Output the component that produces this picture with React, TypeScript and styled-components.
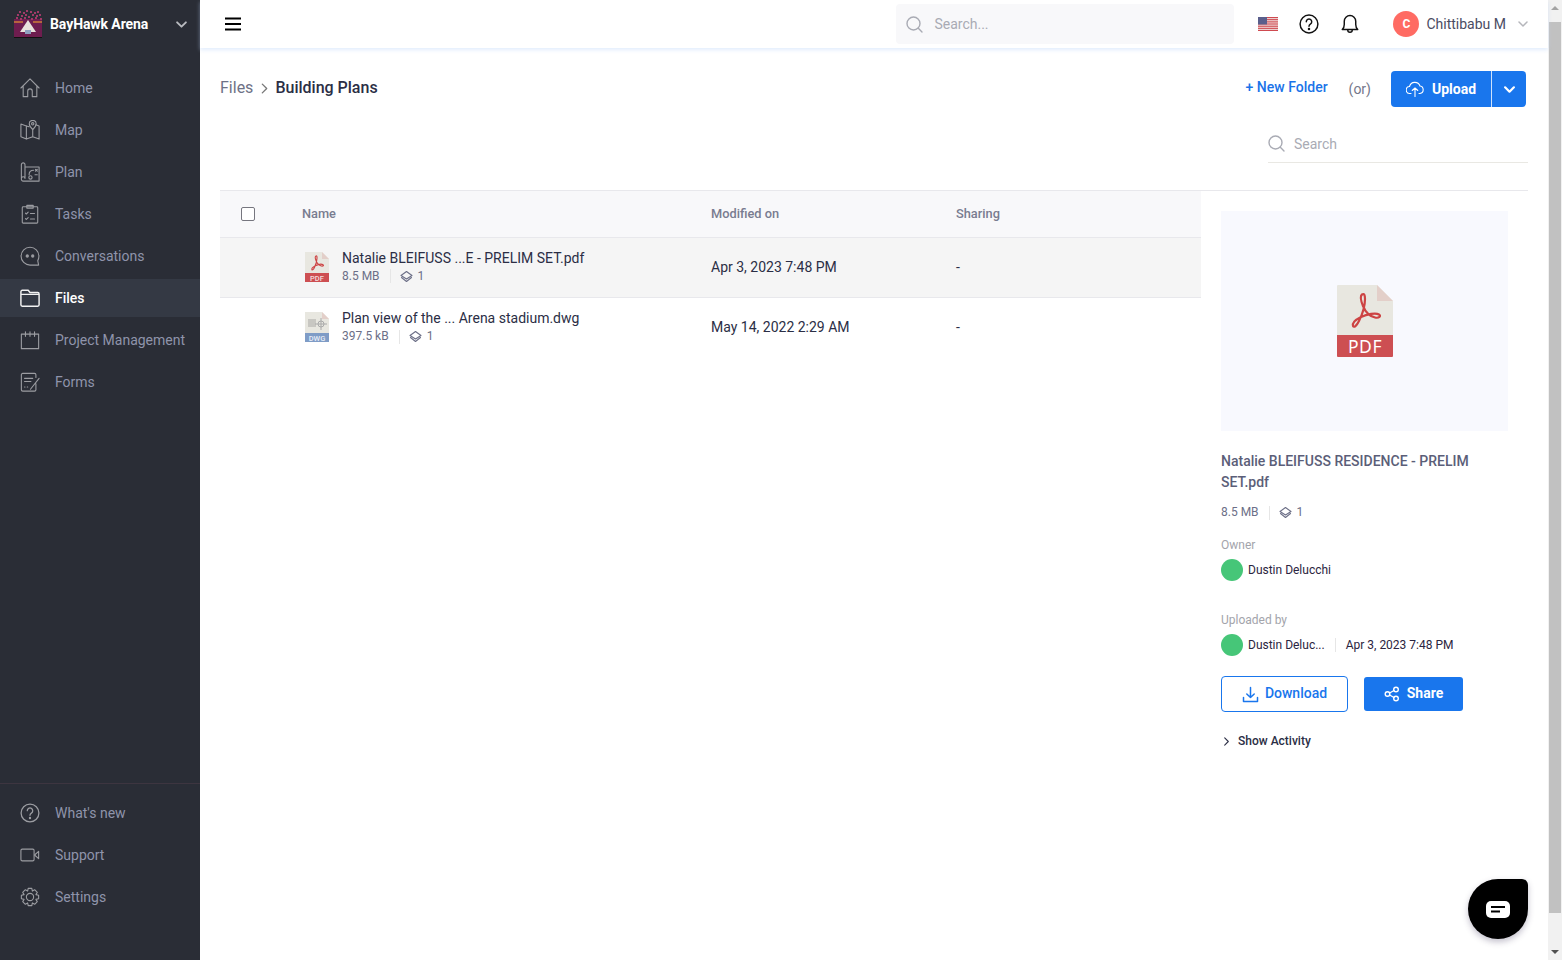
import React from "react";
import styled, { createGlobalStyle } from "styled-components";

const Global = createGlobalStyle`
  html, body { margin: 0; padding: 0; height: 100%; overflow: hidden; background: #fff; }
  body { font-family: Roboto, "Liberation Sans", Arial, sans-serif; -webkit-font-smoothing: auto; }
  * { box-sizing: border-box; }
  #root { height: 100%; }
`;

const Shell = styled.div`display: flex; width: 1562px; height: 960px; position: relative; overflow: hidden;`;
const Sidebar = styled.aside`width: 200px; height: 960px; flex: none; background: #2a2d36; display: flex; flex-direction: column;`;
const Brand = styled.div`height: 48px; display: flex; align-items: center; padding: 0 13px 0 14px; color: #fff; font-size: 14px; font-weight: 700; letter-spacing: -0.08px; svg:last-child { color: #b9bbc0; }`;
const BrandName = styled.span`margin-left: 8px; flex: 1;`;
const NavGroup = styled.nav<{ $bottom?: boolean }>`
  display: flex; flex-direction: column; gap: 4px;
  padding-top: ${p => (p.$bottom ? "10px" : "21px")};
  padding-bottom: ${p => (p.$bottom ? "44px" : "0")};
  ${p => (p.$bottom ? "margin-top: auto; border-top: 1px solid #3d3540;" : "")}
`;
const NavItem = styled.a<{ $active?: boolean }>`
  height: 38px; display: flex; align-items: center; gap: 15px; padding-left: 20px;
  font-size: 14px; white-space: nowrap;
  font-weight: ${p => (p.$active ? 500 : 400)};
  color: ${p => (p.$active ? "#fff" : "#8f94ab")};
  background: ${p => (p.$active ? "#343944" : "transparent")};
  svg { width: 20px; height: 20px; color: ${p => (p.$active ? "#f2f2f2" : "#9c9da2")}; flex: none; }
`;

const Main = styled.main`flex: 1; min-width: 0; display: flex; flex-direction: column; height: 960px;`;
const Header = styled.header`height: 48px; margin-bottom: 1px; flex: none; display: flex; align-items: center; padding: 0 20px 0 25px; background: #fff; box-shadow: 0 2px 4px rgba(190, 215, 250, 0.45); position: relative;`;
const HeaderSearch = styled.div`width: 338px; height: 40px; margin-left: auto; background: #f8f8fa; border-radius: 4px; display: flex; align-items: center; gap: 11px; padding-left: 10px; font-size: 14px; color: #a9abb4;`;
const Flag = styled.div`margin-left: 24px; display: flex;`;
const HeaderIcon = styled.div<{ $gap: number }>`margin-left: ${p => p.$gap}px; display: flex; color: #111; svg { width: 20px; height: 20px; }`;
const Avatar = styled.div`width: 26px; height: 26px; margin-left: 33px; border-radius: 50%; background: #ff6b63; color: #fff; font-size: 12px; font-weight: 700; display: flex; align-items: center; justify-content: center;`;
const UserName = styled.span`margin-left: 7px; font-size: 14px; color: #4a4c63;`;
const UserCaret = styled.div`margin-left: 12px; display: flex; color: #b5b6bb;`;

const Content = styled.div`padding: 22px 20px 0; display: flex; flex-direction: column;`;
const TopRow = styled.div`height: 36px; display: flex; align-items: center; padding-right: 2px;`;
const Crumb = styled.span<{ $current?: boolean }>`font-size: 16px; position: relative; top: -2px; color: ${p => (p.$current ? "#2b2e45" : "#6e7186")}; font-weight: ${p => (p.$current ? 500 : 400)};`;
const CrumbSep = styled.span`display: flex; margin: 0 5px 0 6px; color: #777; position: relative; top: -1px;`;
const NewFolder = styled.a`margin-left: auto; font-size: 14px; font-weight: 500; color: #1a73e8; position: relative; top: -2px;`;
const Or = styled.span`margin: 0 20px 0 21px; font-size: 14px; color: #74778a;`;
const UploadGroup = styled.div`display: flex; width: 135px; height: 36px; border-radius: 4px; background: #1976ed; color: #fff; overflow: hidden;`;
const UploadMain = styled.div`width: 100px; display: flex; align-items: center; justify-content: center; gap: 8px; font-size: 14px; font-weight: 700;`;
const UploadCaret = styled.div`width: 35px; border-left: 1px solid #cfe2fb; display: flex; align-items: center; justify-content: center;`;
const SearchRow = styled.div`display: flex; justify-content: flex-end; margin-top: 19px; margin-bottom: 27px;`;
const SearchField = styled.div`width: 260px; height: 37px; padding-bottom: 1px; border-bottom: 1px solid #e9e8e3; display: flex; align-items: center; gap: 9px; font-size: 14px; color: #a9abb4;`;
const Panels = styled.div`display: flex; border-top: 1px solid #e8e8ec; gap: 20px;`;
const Table = styled.div`width: 981px; flex: none;`;
const cols = "82px 409px 245px 1fr";
const HeadRow = styled.div`display: grid; grid-template-columns: ${cols}; height: 47px; align-items: center; background: #f8f8fa; border-bottom: 1px solid #e8e8ec; font-size: 12.8px; font-weight: 500; color: #797c90;`;
const HeadLabel = styled.span`padding-bottom: 2px;`;
const CheckCell = styled.div`padding-left: 21px; display: flex;`;
const CheckBox = styled.span`width: 14px; height: 14px; border: 1px solid #76767f; border-radius: 2px; background: #fff;`;
const Row = styled.div<{ $selected?: boolean }>`display: grid; grid-template-columns: ${cols}; height: 60px; padding-bottom: 2px; align-items: center; border-bottom: ${p => (p.$selected ? "1px solid #e8e8ec" : "none")}; background: ${p => (p.$selected ? "#f5f5f5" : "#fff")}; font-size: 14px; color: #2b2e45;`;
const NameCell = styled.div`display: flex; align-items: center; gap: 13px; margin-left: -40px; grid-column: 2; padding-left: 43px;`;
const NameWrap = styled.div`display: flex; flex-direction: column; gap: 1px;`;
const FileName = styled.span`font-size: 14px; line-height: 18px; color: #2b2e45;`;
const Meta = styled.div`display: flex; align-items: center; font-size: 12px; line-height: 17px; color: #6c6f87;`;
const MetaSep = styled.span`width: 1px; height: 14px; background: #e6e6e6; margin: 0 9px 0 10px;`;
const MetaCount = styled.span`display: flex; align-items: center; gap: 5px;`;

const Detail = styled.section`width: 287px; padding-top: 20px; display: flex; flex-direction: column;`;
const Preview = styled.div`height: 220px; background: #f8f9fe; display: flex; align-items: center; justify-content: center;`;
const DetailTitle = styled.div`margin-top: 20px; font-size: 14px; line-height: 21px; font-weight: 500; color: #5b5e78;`;
const DetailMeta = styled(Meta)`margin-top: 11px;`;
const Label = styled.div<{ $top: number }>`margin-top: ${p => p.$top}px; font-size: 12px; line-height: 16px; color: #a3a4ab;`;
const Person = styled.div`display: flex; align-items: center; margin-top: 6px; font-size: 12px; color: #2b2440;`;
const Dot = styled.span`width: 22px; height: 22px; border-radius: 50%; background: #46c678; margin-right: 5px;`;
const PersonSep = styled.span`width: 1px; height: 14px; background: #e6e6e6; margin: 0 10px;`;
const Buttons = styled.div`display: flex; align-items: center; gap: 16px; margin-top: 20px;`;
const DownloadBtn = styled.div`width: 127px; height: 36px; border: 1px solid #1976ed; border-radius: 4px; color: #1976ed; font-size: 14px; font-weight: 500; display: flex; align-items: center; justify-content: center; gap: 6px;`;
const ShareBtn = styled.div`width: 99px; height: 34px; border-radius: 3px; background: #1976ed; color: #fff; font-size: 14px; font-weight: 700; display: flex; align-items: center; justify-content: center; gap: 7px;`;
const BtnLabel = styled.span`margin-bottom: 2px;`;
const Activity = styled.div`margin-top: 20px; height: 18px; display: flex; align-items: center; gap: 7px; font-size: 12px; font-weight: 500; color: #2b2e45; padding-left: 1px;`;

const Scrollbar = styled.div`width: 14px; flex: none; background: #f1f1f1; display: flex; flex-direction: column; align-items: center; justify-content: space-between; height: 960px;`;
const ScrollThumbTrack = styled.div`flex: 1; width: 100%; margin: 6px 0; padding: 0 1px;`;
const ScrollThumb = styled.div`height: 891px; background: #c1c1c1;`;
const ScrollArrow = styled.div<{ $down?: boolean }>`width: 0; height: 0; margin: 6px 0; border-left: 4px solid transparent; border-right: 4px solid transparent; ${p => (p.$down ? "border-top: 4px solid #505050;" : "border-bottom: 4px solid #a3a3a3;")}`;
const Chat = styled.div`position: absolute; left: 1468px; top: 879px; width: 60px; height: 60px; background: #000; border-radius: 50% 6px 50% 50%; box-shadow: 0 3px 6px rgba(60, 50, 90, 0.3); display: flex; align-items: center; justify-content: center;`;

const Ic: React.FC<{ size?: number; w?: number; sw?: number; children: React.ReactNode; box?: string }> = ({ size = 22, w, sw = 1.2, box = "0 0 22 22", children }) => (
  <svg width={w ?? size} height={size} viewBox={box} fill="none" stroke="currentColor" strokeWidth={sw} strokeLinecap="round" strokeLinejoin="round">{children}</svg>
);

const Home = () => <Ic><path d="M1 11 11 1l10 10M3.500 9v11.500h5v-6a2.500 2.500 0 0 1 5 0v6h5V9" /></Ic>;
const MapI = () => <Ic><path d="M7 6.500 1 4.500v14l6 2.500 7-2.500 7 2.500V6.500l-3.500-1.200M7 6.500V21M14 10v8.500M7 6.500l3 1" /><path d="M14 10.500s-3.800-3.500-3.800-6.300a3.800 3.800 0 0 1 7.600 0c0 2.800-3.800 6.300-3.800 6.300Z" /><circle cx="14" cy="4.200" r="1.300" /></Ic>;
const Plan = () => <Ic><path d="M1.500 18.500V3a2 2 0 0 1 4 0v15M1.500 18.500a2.200 2.200 0 0 0 2 2.500H21V5.500H5.500M1.500 18.500a2 2 0 0 1 4-.5" /><circle cx="11.500" cy="17" r="1.800" /><path d="M10 14c0-3 2-5 5-5M16.500 14H19M17 8l2 2M19 8l-2 2" /></Ic>;
const Tasks = () => <Ic><rect x="2.500" y="3" width="17" height="18" rx="1" /><path d="M7.500 1.500h7V4.500h-7zM6 10l1 1 2-2M6 16l1 1 2-2M11.500 10.500H16M11.500 16.500H16" /></Ic>;
const Conv = () => <Ic><path d="M20.500 21H11a9.800 9.800 0 1 1 9.800-9.800c0 2-.5 3.500-1.300 5l1 4.800Z" /><circle cx="8" cy="11" r="1.200" fill="currentColor" /><circle cx="14" cy="11" r="1.200" fill="currentColor" /></Ic>;
const Folder = () => <Ic sw={1.600}><path d="M1 7V4a1.500 1.500 0 0 1 1.500-1.500H9L11 5h8.500A1.500 1.500 0 0 1 21 6.500v12a1.500 1.500 0 0 1-1.500 1.500h-17A1.500 1.500 0 0 1 1 18.500V7h20" /></Ic>;
const Project = () => <Ic><path d="M1.500 4.500h19v16h-19zM6 2v5M11 2v5M16 2v5" /></Ic>;
const Forms = () => <Ic><path d="M17.500 6V3a1.500 1.500 0 0 0-1.500-1.500H3A1.500 1.500 0 0 0 1.500 3v16.500A1.500 1.500 0 0 0 3 21h13a1.500 1.500 0 0 0 1.500-1.500V13M5 7h9M5 10.500h7M5 16.500h.5M8 16.500h.5M11.500 19 21 7" /></Ic>;
const HelpI: React.FC<{ sw?: number }> = ({ sw = 1.400 }) => <Ic sw={sw}><circle cx="11" cy="11" r="9.800" /><path d="M8 8.500a3 3 0 1 1 4.500 2.600c-1 .6-1.500 1.100-1.500 2.400" /><circle cx="11" cy="16.500" r=".6" fill="currentColor" /></Ic>;
const Video = () => <Ic><rect x="1" y="4.500" width="14.500" height="13" rx="1.500" /><path d="M16 11l4.500-4v8z" /></Ic>;
const Gear = () => <Ic><circle cx="11" cy="11" r="4" /><path d="M9 1.500h4l.6 3 2.500-1.500 2.900 2.900-1.500 2.500 3 .6v4l-3 .6 1.500 2.500-2.900 2.900-2.500-1.500-.6 3H9l-.6-3-2.500 1.500L3 16.100l1.500-2.500-3-.6v-4l3-.6L3 5.900 5.900 3l2.500 1.500z" /></Ic>;
const Chevron: React.FC<{ size?: number; sw?: number }> = ({ size = 10, sw = 1.500 }) => <Ic size={size} sw={sw} box="0 0 10 10"><path d="M1 3l4 4 4-4" /></Ic>;
const ChevronRight: React.FC<{ size?: number; sw?: number }> = ({ size = 10, sw = 1.200 }) => <Ic size={size} sw={sw} box="0 0 10 10"><path d="M3 1l4 4-4 4" /></Ic>;
const Burger = () => <Ic size={16} sw={2} box="0 0 16 16"><path d="M.5 2.500h15M.5 8h15M.5 13.500h15" /></Ic>;
const SearchI = () => <Ic size={17} sw={1.400} box="0 0 17 17"><circle cx="7.500" cy="7.500" r="6.500" /><path d="M12.300 12.300 16 16" /></Ic>;
const Bell = () => <Ic sw={1.600}><path d="M2.500 17c1.500-1.500 2.200-3 2.200-5.500V8a6.300 6.300 0 0 1 12.600 0v3.500c0 2.500.7 4 2.200 5.500zM8.500 17.500a2.500 2.500 0 0 0 5 0" /></Ic>;
const Cloud = () => <Ic size={18} sw={1.100} box="0 0 18 18"><path d="M5 13.500H4a3.500 3.500 0 0 1-.5-7A5.500 5.500 0 0 1 14 6a3.800 3.800 0 0 1 0 7.500h-1" /><path d="M9 16.500V8M6.200 10.500 9 8l2.800 2.500" /></Ic>;
const Layers: React.FC = () => <Ic size={13} sw={1.100} box="0 0 13 13"><path d="M6.500 1.500 12 5.500 6.500 9 1 5.500zM1.500 7.500 6.500 11.500l5-4" /></Ic>;
const Download = () => <Ic size={17} sw={1.500} box="0 0 17 17"><path d="M8.500 1.500v10M4.800 8l3.700 3.500L12.200 8M1.500 11.500v4h14v-4" /></Ic>;
const Share = () => <Ic size={16} sw={1.400} box="0 0 16 16"><circle cx="3.500" cy="8" r="2.300" /><circle cx="12" cy="3.500" r="2.300" /><circle cx="12" cy="12.500" r="2.300" /><path d="M5.600 7 10 4.500M5.600 9 10 11.500" /></Ic>;

const Logo = () => (
  <svg width="28" height="28" viewBox="0 0 28 28">
    <path d="M6 0h16l6 6v8H0V6z" fill="#2a2d36" />
    <rect x="0" y="9" width="28" height="18" fill="#6e1d4f" />
    {[[5,1],[9,2],[12,0],[16,1],[20,2],[23,1],[3,4],[7,5],[11,4],[14,6],[18,4],[22,5],[25,4],[2,7],[6,8],[10,7],[17,8],[21,7],[26,8]].map(([x, y]) => (
      <rect key={`${x}-${y}`} x={x} y={y} width="2" height="2" fill="#a13a68" />
    ))}
    <rect x="0" y="11" width="9" height="2" fill="#b5643e" />
    <rect x="19" y="11" width="9" height="2" fill="#b5643e" />
    <path d="M14 10 22 22H6z" fill="#e9e2dc" />
    <path d="M11 20h6v4h-6z" fill="#8fa0c0" />
    <rect x="0" y="27" width="28" height="1" fill="#111" />
  </svg>
);

const Usa = () => (
  <svg width="20" height="14" viewBox="0 0 20 14">
    <rect width="20" height="14" fill="#f4f1ef" />
    {[0, 2.100, 4.300, 6.400, 8.600, 10.700, 12.800].map(y => <rect key={y} y={y} width="20" height="1.200" fill="#cf4a50" />)}
    <rect width="9" height="7.500" fill="#5a5f8c" />
  </svg>
);

const swirl = "M25 9.500C23 11 24 16 26 21 28 26 32 31 38 32.500 42 33.500 44.500 31 42 29.500 39 27.500 30 29 24 32 19 34.500 15 38 16 41 17 43 19.500 41 22 36 25 30 28 21 28 14 28 10 27 8 25 9.500Z";

const PdfIcon: React.FC<{ w: number; h: number }> = ({ w, h }) => (
  <svg width={w} height={h} viewBox="0 0 56 72">
    <path d="M1 0h39l16 16v34H0V1a1 1 0 0 1 1-1Z" fill="#e8e7e0" />
    <path d="M40 0l16 16H40z" fill="#e3cfc9" />
    <path d="M0 50h56v21a1 1 0 0 1-1 1H1a1 1 0 0 1-1-1z" fill="#cd4f52" />
    <path d={swirl} fill="none" stroke="#cd4444" strokeWidth="2.200" strokeLinejoin="round" />
    <text x="28" y="68" textAnchor="middle" fontFamily="'Noto Sans', sans-serif" fontSize="17.500" fill="#fff" letterSpacing=".5">PDF</text>
  </svg>
);

const SmallPdf = () => (
  <svg width="24" height="30" viewBox="0 0 24 30">
    <path d="M0 0h17l7 7v15H0z" fill="#e8e7e0" />
    <path d="M17 0l7 7h-7z" fill="#e3cfc9" />
    <path d="M0 21h24v9H0z" fill="#cd4f52" />
    <path d={swirl} transform="scale(.43 .43)" fill="none" stroke="#cd4444" strokeWidth="2.600" />
    <text x="12" y="28.500" textAnchor="middle" fontFamily="Roboto, sans-serif" fontSize="7.500" fontWeight="500" fill="#f4dede">PDF</text>
  </svg>
);

const SmallDwg = () => (
  <svg width="24" height="30" viewBox="0 0 24 30">
    <path d="M0 0h17l7 7v15H0z" fill="#e8e7e0" />
    <path d="M17 0l7 7h-7z" fill="#e3cfc9" />
    <path d="M0 21h24v9H0z" fill="#7f9cc6" />
    <rect x="3" y="7" width="8" height="8" fill="#c8c7c2" />
    <circle cx="16" cy="12" r="3" fill="none" stroke="#aaa" />
    <path d="M16 6v12M10 12h12" stroke="#aaa" />
    <text x="12" y="28.500" textAnchor="middle" fontFamily="Roboto, sans-serif" fontSize="7.500" fontWeight="500" fill="#e8eef8">DWG</text>
  </svg>
);

const top = [
  { label: "Home", icon: <Home /> },
  { label: "Map", icon: <MapI /> },
  { label: "Plan", icon: <Plan /> },
  { label: "Tasks", icon: <Tasks /> },
  { label: "Conversations", icon: <Conv /> },
  { label: "Files", icon: <Folder />, active: true },
  { label: "Project Management", icon: <Project /> },
  { label: "Forms", icon: <Forms /> },
];
const bottom = [
  { label: "What's new", icon: <HelpI /> },
  { label: "Support", icon: <Video /> },
  { label: "Settings", icon: <Gear /> },
];

const files = [
  { name: "Natalie BLEIFUSS ...E - PRELIM SET.pdf", size: "8.5 MB", date: "Apr 3, 2023 7:48 PM", icon: <SmallPdf />, selected: true },
  { name: "Plan view of the ... Arena stadium.dwg", size: "397.5 kB", date: "May 14, 2022 2:29 AM", icon: <SmallDwg />, selected: false },
];

export default function App() {
  return (
    <Shell>
      <Global />
      <Sidebar>
        <Brand>
          <Logo />
          <BrandName>BayHawk Arena</BrandName>
          <Chevron size={11} sw={1.700} />
        </Brand>
        <NavGroup>
          {top.map(i => <NavItem key={i.label} $active={i.active}>{i.icon}{i.label}</NavItem>)}
        </NavGroup>
        <NavGroup $bottom>
          {bottom.map(i => <NavItem key={i.label}>{i.icon}{i.label}</NavItem>)}
        </NavGroup>
      </Sidebar>
      <Main>
        <Header>
          <Burger />
          <HeaderSearch><SearchI />Search...</HeaderSearch>
          <Flag><Usa /></Flag>
          <HeaderIcon $gap={21}><HelpI sw={1.600} /></HeaderIcon>
          <HeaderIcon $gap={21}><Bell /></HeaderIcon>
          <Avatar>C</Avatar>
          <UserName>Chittibabu M</UserName>
          <UserCaret><Chevron size={10} /></UserCaret>
        </Header>
        <Content>
          <TopRow>
            <Crumb>Files</Crumb>
            <CrumbSep><ChevronRight size={11} /></CrumbSep>
            <Crumb $current>Building Plans</Crumb>
            <NewFolder>+ New Folder</NewFolder>
            <Or>(or)</Or>
            <UploadGroup>
              <UploadMain><Cloud />Upload</UploadMain>
              <UploadCaret><Chevron size={11} sw={2} /></UploadCaret>
            </UploadGroup>
          </TopRow>
          <SearchRow>
            <SearchField><SearchI />Search</SearchField>
          </SearchRow>
          <Panels>
            <Table>
              <HeadRow>
                <CheckCell><CheckBox /></CheckCell>
                <HeadLabel>Name</HeadLabel>
                <HeadLabel>Modified on</HeadLabel>
                <HeadLabel>Sharing</HeadLabel>
              </HeadRow>
              {files.map(f => (
                <Row key={f.name} $selected={f.selected}>
                  <NameCell>
                    {f.icon}
                    <NameWrap>
                      <FileName>{f.name}</FileName>
                      <Meta>{f.size}<MetaSep /><MetaCount><Layers />1</MetaCount></Meta>
                    </NameWrap>
                  </NameCell>
                  <span>{f.date}</span>
                  <span>-</span>
                </Row>
              ))}
            </Table>
            <Detail>
              <Preview><PdfIcon w={56} h={72} /></Preview>
              <DetailTitle>Natalie BLEIFUSS RESIDENCE - PRELIM SET.pdf</DetailTitle>
              <DetailMeta>8.5 MB<MetaSep /><MetaCount><Layers />1</MetaCount></DetailMeta>
              <Label $top={16}>Owner</Label>
              <Person><Dot />Dustin Delucchi</Person>
              <Label $top={31}>Uploaded by</Label>
              <Person><Dot />Dustin Deluc...<PersonSep />Apr 3, 2023 7:48 PM</Person>
              <Buttons>
                <DownloadBtn><Download /><BtnLabel>Download</BtnLabel></DownloadBtn>
                <ShareBtn><Share /><BtnLabel>Share</BtnLabel></ShareBtn>
              </Buttons>
              <Activity><ChevronRight size={9} />Show Activity</Activity>
            </Detail>
          </Panels>
        </Content>
      </Main>
      <Scrollbar>
        <ScrollArrow />
        <ScrollThumbTrack><ScrollThumb /></ScrollThumbTrack>
        <ScrollArrow $down />
      </Scrollbar>
      <Chat>
        <svg width="24" height="17" viewBox="0 0 24 17">
          <rect width="24" height="17" rx="5" fill="#fff" />
          <path d="M5 6h14" stroke="#000" strokeWidth="2" />
          <path d="M5 10.500h9" stroke="#000" strokeWidth="2" />
        </svg>
      </Chat>
    </Shell>
  );
}
